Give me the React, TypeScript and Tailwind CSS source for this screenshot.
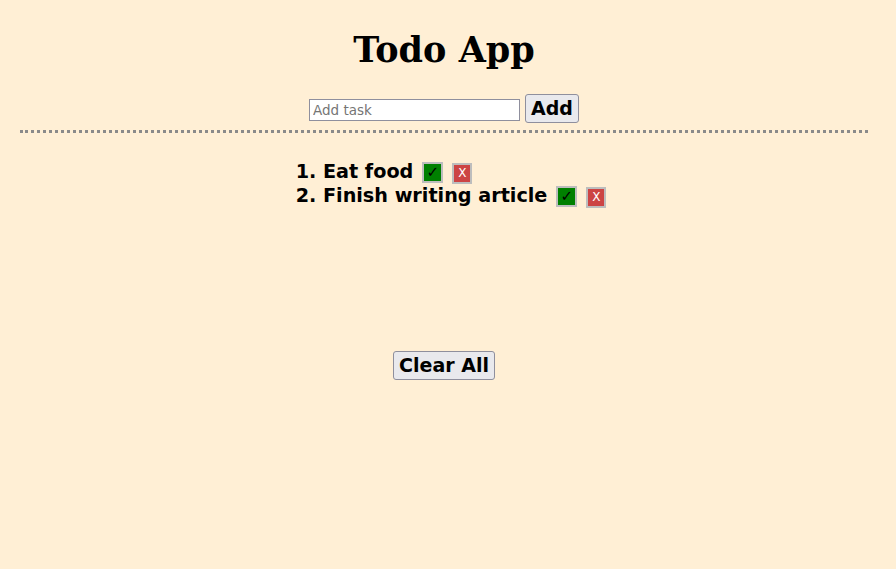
// @ts-nocheck
import { useState } from 'react';

export default function App() {
  const [tasks, setTasks] = useState(['Eat food', 'Finish writing article']);
  const [text, setText] = useState('');

  const add = () => {
    if (!text.trim()) return;
    setTasks([...tasks, text.trim()]);
    setText('');
  };

  return (
    <main className="min-h-[569px] bg-[#ffefd5] text-black" style={{ fontFamily: '"DejaVu Sans", sans-serif' }}>
      <div className="w-[888px] pt-[27px]">
        <h1 className="text-center text-[35px] font-bold leading-[46px] [font-family:'DejaVu_Serif',serif]">Todo App</h1>
        <div className="mt-[21px] flex items-center justify-center gap-[5px]">
          <input
            value={text}
            onChange={(e) => setText(e.target.value)}
            placeholder="Add task"
            className="mt-[3px] h-[22px] w-[211px] border border-[#8f8f9d] bg-white px-[3px] text-[13.5px] placeholder:text-[#757575]"
          />
          <button onClick={add} className="h-[29px] rounded-[3px] border border-[#8f8f9d] bg-[#e9e9ed] px-[5px] text-[19px] font-bold leading-none">
            Add
          </button>
        </div>
        <hr className="mx-[20px] mt-[7px] border-0 border-t-[3px] border-dotted border-[#8a8a8a]" />
        <div className="flex h-[218px] justify-center pl-[14px] pt-[27px]">
          <ol className="list-inside list-decimal text-[19.2px] font-bold leading-[24px]">
            {tasks.map((t, i) => (
              <li key={i} className="h-[24px]">
                {t}
                <button className="ml-[9px] inline-flex h-[21px] w-[21px] items-center justify-center border-2 border-[#bdbdbd] bg-[#008000] align-[1px] text-[15px] font-normal leading-none text-black">
                  ✓
                </button>
                <button className="ml-[9px] inline-flex h-[21px] w-[20px] items-center justify-center border-2 border-[#bdbdbd] bg-[#cc4444] align-[1px] text-[12px] font-normal leading-none text-white">
                  X
                </button>
              </li>
            ))}
          </ol>
        </div>
        <div className="flex justify-center">
          <button onClick={() => setTasks([])} className="h-[29px] rounded-[3px] border border-[#8f8f9d] bg-[#e9e9ed] px-[5px] text-[19px] font-bold leading-none">
            Clear All
          </button>
        </div>
      </div>
    </main>
  );
}
